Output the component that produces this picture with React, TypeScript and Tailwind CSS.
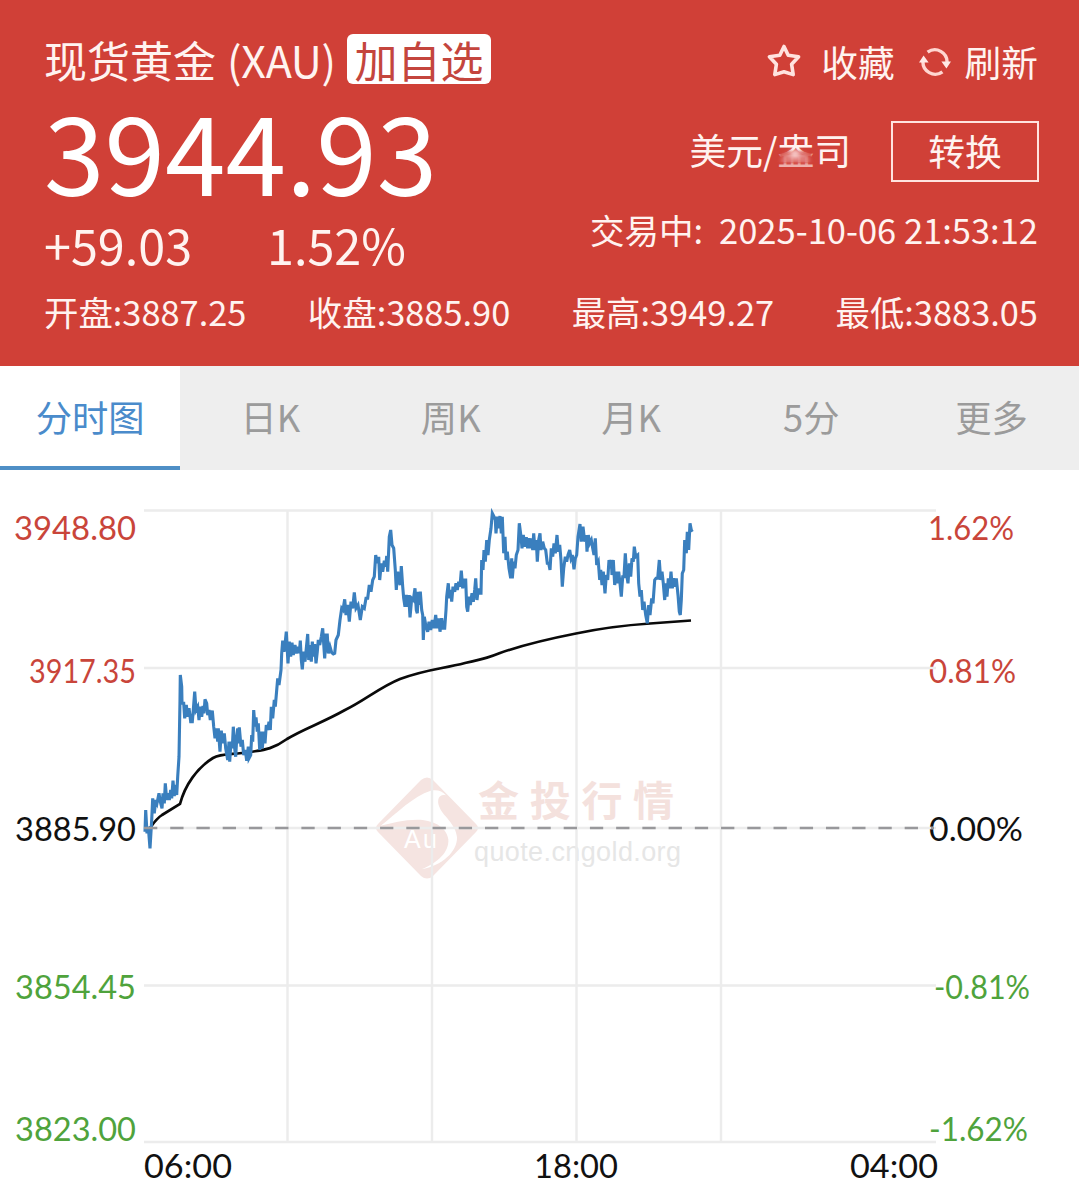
const CJK = "font-['Noto_Sans_CJK_SC',sans-serif]";

const tabs = ["分时图", "日K", "周K", "月K", "5分", "更多"];
const stats = ["开盘:3887.25", "收盘:3885.90", "最高:3949.27", "最低:3883.05"];

// Price samples grouped by session; offsets are in thirds of a pixel from the group origin.
const samples = [
  { x: 135, y: 660, d: "30,515 32,450 36,520 40,500 45,565 50,480 53,415 58,460 62,420 66,430 72,400 76,425 81,445 84,400 88,430 91,370 95,420 99,400 103,420 107,390 110,415 114,362 118,408 121,375 125,405 128,350 132,290 135,120 136,45 140,80 141,130 146,130 149,175 154,135 158,170 162,145 167,185 172,185 175,150 179,95 183,150 188,140 192,180 196,140 200,170 204,138 207,160 210,118 215,130 218,165 222,150 226,180 232,152 236,200 240,235 244,205 248,245 250,205 255,275 259,212 263,250 268,220 272,265 278,300 282,245 284,305 288,245 292,265 295,200 299,265 302,290 305,235 308,205 310,250 313,202 318,260 322,240 326,285 331,270 335,302 340,260 342,295 347,285 350,225 353,245 356,150 360,200 363,172 367,215 370,190 374,270 378,215 382,265 386,215 390,250 394,195 398,210 402,185 406,210 409,140 413,175 418,120 421,140 428,55 432,75 438,30" },
  { x: 270, y: 520, d: "34,430 35,400 38,362 42,395 46,365 49,335 54,430 58,365 62,410 66,368 70,405 75,375 79,400 84,380 88,400 91,362 94,420 97,448 101,395 105,425 109,385 113,342 116,420 120,375 124,425 127,365 131,410 134,372 138,430 142,395 145,360 149,375 154,350 158,325 162,385 164,415 168,345 172,345 175,400 180,380 185,398 190,402 194,400 198,360 205,345 210,300 215,265 219,270 224,238 228,285 233,255 238,305 243,245 248,265 253,217 258,265 264,255 271,300 277,260 283,265 288,235 293,235 298,195 303,215 308,180 313,170 317,105 322,130 326,110 329,180 334,130 338,155 343,122 347,140 350,108 353,155 356,90 358,50 362,30 366,75 371,85 376,150 379,210 383,155 387,185 391,195 394,138 398,200 401,235 405,260 409,225 413,260 416,225 420,292 425,235 430,240 435,205 439,270 442,280 445,215 448,255 451,215 455,270 458,285 460,360 463,290 468,320 473,335 477,305 482,330 487,300 492,325 497,285 501,325 506,295 510,335 515,295 519,325 524,325 528,270 530,230 535,190 538,235" },
  { x: 420, y: 500, d: "92,270 95,305 99,260 104,275 108,250 112,270 116,245 120,260 124,212 128,265 133,240 137,240 140,320 143,335 147,290 151,315 156,280 160,305 164,270 167,235 171,300 175,265 179,280 183,280 185,180 189,210 192,150 196,185 200,120 204,165 208,120 213,85 217,40 222,50 226,60 228,100 232,50 236,85 240,48 244,100 247,50 251,160 255,110 258,180 262,155 267,205 272,235 275,175 277,235 281,185 285,205 289,165 294,150 298,70 303,110 306,145 310,105 315,140 319,112 323,145 327,115 331,145 335,115 338,150 341,100 345,150 349,120 352,185 356,120 360,100 363,150 368,125 373,145 377,150 382,190 386,190 390,210 394,145 398,170 402,130 406,160 411,105 415,155 419,135 423,180 427,260 431,205 436,170 440,185 444,165 449,150" },
  { x: 560, y: 500, d: "33,175 37,165 42,208 46,175 50,165 54,110 60,72 64,125 69,80 74,125 79,105 81,155 85,105 89,130 94,120 98,145 102,165 106,115 110,195 115,185 119,240 122,210 126,255 130,215 135,280 139,225 143,240 147,180 151,205 154,180 156,225 160,180 164,255 168,215 172,250 176,215 180,250 184,290 188,230 192,230 196,160 200,225 204,250 208,190 212,230 216,175 220,185 223,140 227,170 233,165 236,250 240,290 244,270 248,330 252,305 257,345 262,370 266,315 270,345 275,295 279,310 284,240 288,235 293,235 298,180 302,240 306,215 310,250 314,300 318,250 321,290 325,235 329,265 333,215 337,265 341,235 345,260 349,235 354,285 358,335 361,345 364,300 367,220 371,210 374,120 379,160 382,95 386,150 390,70 394,90 397,95" },
];

const price = samples
  .flatMap((g) =>
    g.d.split(" ").map((p) => {
      const [a, b] = p.split(",").map(Number);
      return `${(g.x + a / 3).toFixed(1)},${(g.y + b / 3).toFixed(1)}`;
    }),
  )
  .join(" ");

const labels: [string, number, number, number, string][] = [
  ["3948.80", 14, 540, 122, "#c9453a"],
  ["3917.35", 29, 683, 107, "#c9453a"],
  ["3885.90", 15, 841, 121, "#111111"],
  ["3854.45", 15, 999, 121, "#4fa33c"],
  ["3823.00", 15, 1141, 121, "#4fa33c"],
  ["1.62%", 928, 540, 86, "#c9453a"],
  ["0.81%", 929, 683, 87, "#c9453a"],
  ["0.00%", 929, 841, 94, "#111111"],
  ["-0.81%", 934, 999, 96, "#4fa33c"],
  ["-1.62%", 929, 1141, 99, "#4fa33c"],
  ["06:00", 144, 1178, 88, "#111111"],
  ["18:00", 534, 1178, 84, "#111111"],
  ["04:00", 850, 1178, 88, "#111111"],
];

function Star() {
  return (
    <svg width="36" height="36" viewBox="0 0 36 36" fill="none" stroke="#ffe3df" strokeWidth="3.6" strokeLinejoin="round">
      <path d="M18 3.5 L22.2 12.2 L32.6 13.7 L25.6 21.2 L27.2 31.6 L18 28.8 L8.8 31.6 L10.4 21.2 L3.4 13.7 L13.8 12.2 Z" />
    </svg>
  );
}

function Refresh() {
  return (
    <svg width="32" height="32" viewBox="0 0 32 32" fill="none">
      <path d="M8.6 6.2 A12.2 12.2 0 0 1 28 17" stroke="#ffd6d0" strokeWidth="3.4" />
      <path d="M23.4 25.8 A12.2 12.2 0 0 1 4 15" stroke="#ffd6d0" strokeWidth="3.4" />
      <path d="M22.4 15.5 H32 L27.4 22.5 Z M9.6 16.5 H0 L4.6 9.5 Z" fill="#ffe9e5" />
    </svg>
  );
}

function Header() {
  return (
    <header className="h-[366px] bg-[#d04037] pt-[31px] pr-[41px] pl-[44px] text-[#fff3f0]">
      <div className="flex h-[243px] justify-between">
        <div className="pt-[3px]">
          <div className="flex h-[50px] text-[43px] leading-[50px] whitespace-pre">
            <span>现货黄金</span>
            <span className="ml-[11px] w-[109px] tracking-[-0.3px]">(XAU)</span>
            <span className="ml-[11px] w-[144px] rounded-[6px] bg-white text-center text-[#c4453d]">加自选</span>
          </div>
          <div className="h-[130px] text-[109px] leading-[130px] text-white">3944.93</div>
          <div className="flex h-[60px] text-[48.5px] leading-[60px]">
            <span className="w-[223px]">+59.03</span>
            <span>1.52%</span>
          </div>
        </div>
        <div className="flex flex-col items-end">
          <div className="flex h-[60px] items-center text-[36.7px] leading-[60px]">
            <Star />
            <span className="ml-[19px]">收藏</span>
            <span className="ml-[24px] pt-[2px]">
              <Refresh />
            </span>
            <span className="ml-[14px]">刷新</span>
          </div>
          <div className="mt-[30px] -mr-px flex h-[61px] text-[36.8px] leading-[56px]">
            <span>美元/</span>
            <span className="relative">
              盎
              <span className="absolute top-[30px] left-[2px] h-[12px] w-[33px] bg-[#d04037]/85 blur-[1px]" />
              <span className="absolute top-[31px] left-[4px] h-[11px] w-[29px] rounded-t-full bg-[#efa9a8]/60 blur-[2px]" />
              <span className="absolute top-[28px] left-[13px] h-[9px] w-[10px] rounded-full bg-[#ffe9e9]/70 blur-[2px]" />
              <span className="absolute top-[41px] left-0 h-[6px] w-[37px] bg-[#d04037]/35" />
            </span>
            <span>司</span>
            <span className="ml-[40px] w-[148px] border-2 border-[#ffe3df] text-center leading-[54px]">转换</span>
          </div>
          <div className="mt-[22px] flex h-[50px] text-[34.5px] leading-[50px]">
            <span className="w-[129px]">交易中:</span>
            <span>2025-10-06 21:53:12</span>
          </div>
        </div>
      </div>
      <div className="mt-[12px] flex justify-between text-[34.4px] leading-[50px]">
        {stats.map((s) => (
          <span key={s}>{s}</span>
        ))}
      </div>
    </header>
  );
}

function Tabs() {
  return (
    <nav className="grid h-[104px] grid-cols-[repeat(6,180.3px)] bg-[#eeeeee] text-center text-[36.3px] leading-[100px] text-[#9b9b9b]">
      {tabs.map((t, i) => (
        <div key={t} className={i === 0 ? "border-b-4 border-[#4f8fc6] bg-white text-[#4a8bcb]" : ""}>
          {t}
        </div>
      ))}
    </nav>
  );
}

function Watermark() {
  return (
    <g>
      <path d="M421 780 Q427 775 433 780 L476 824 Q480 828 476 832 L433 876 Q427 881 421 876 L378 832 Q374 828 378 824 Z" fill="#f5e4e1" />
      <path
        transform="translate(360 760) scale(0.3333)"
        d="M62 197 C110 160 160 108 212 92 C232 88 248 94 258 106 C238 100 230 118 237 138 C247 168 288 190 291 232 C293 275 245 318 185 328 C235 308 268 275 265 238 C260 198 215 179 172 179 C130 179 95 190 62 197 Z"
        fill="#ffffff"
      />
      <text x="404" y="848" fontSize="25" fill="#ffffff" textLength="33" className="font-['Liberation_Sans',sans-serif]">Au</text>
      <text x="478" y="816" fontSize="41" fontWeight="700" fill="#f4e1dd" letterSpacing="10.7" className="font-['Noto_Sans_CJK_SC',sans-serif]">金投行情</text>
      <text x="474" y="861" fontSize="27" fill="#e6e6e6" textLength="207" className="font-['Liberation_Sans',sans-serif]">quote.cngold.org</text>
    </g>
  );
}

function Chart() {
  return (
    <svg className="block" width="1079" height="732" viewBox="0 470 1079 732">
      <Watermark />
      <g className="font-[Lato,sans-serif]" fontSize="33.5">
        {labels.map(([t, x, y, w, c]) => (
          <text key={t} x={x} y={y} textLength={w} lengthAdjust="spacingAndGlyphs" fill={c}>
            {t}
          </text>
        ))}
      </g>
      <path d="M144 510.5H936M144 668H936M144 828H936M144 985.5H936M144 1142H936M287.5 510V1142M432 510V1142M576.5 510V1142M721 510V1142" stroke="#ececec" strokeWidth="2.4" fill="none" />
      <path d="M150 828 C153 824 156 819 162 815 L180 804 C185 785 197 768 213 758 C222 753 232 755 250 752 C262 750 272 750 287 739 C303 729 322 723 345 710 C364 701 380 687 400 679 C427 669 442 669 465 663 C487 658 490 657 500 653 C520 646 548 639 576 633.5 C607 627 628 625 650 623.5 L691 620.5" fill="none" stroke="#0a0a0a" strokeWidth="2.7" />
      <polyline points={price} fill="none" stroke="#3a7fbe" strokeWidth="3.1" strokeLinejoin="miter" strokeMiterlimit="4" />
      <path d="M144 828H934" stroke="#98989b" strokeWidth="2.4" strokeDasharray="13.3 12.93" />
    </svg>
  );
}

export default function App() {
  return (
    <main className={`w-[1079px] overflow-hidden bg-white ${CJK}`}>
      <Header />
      <Tabs />
      <Chart />
    </main>
  );
}
